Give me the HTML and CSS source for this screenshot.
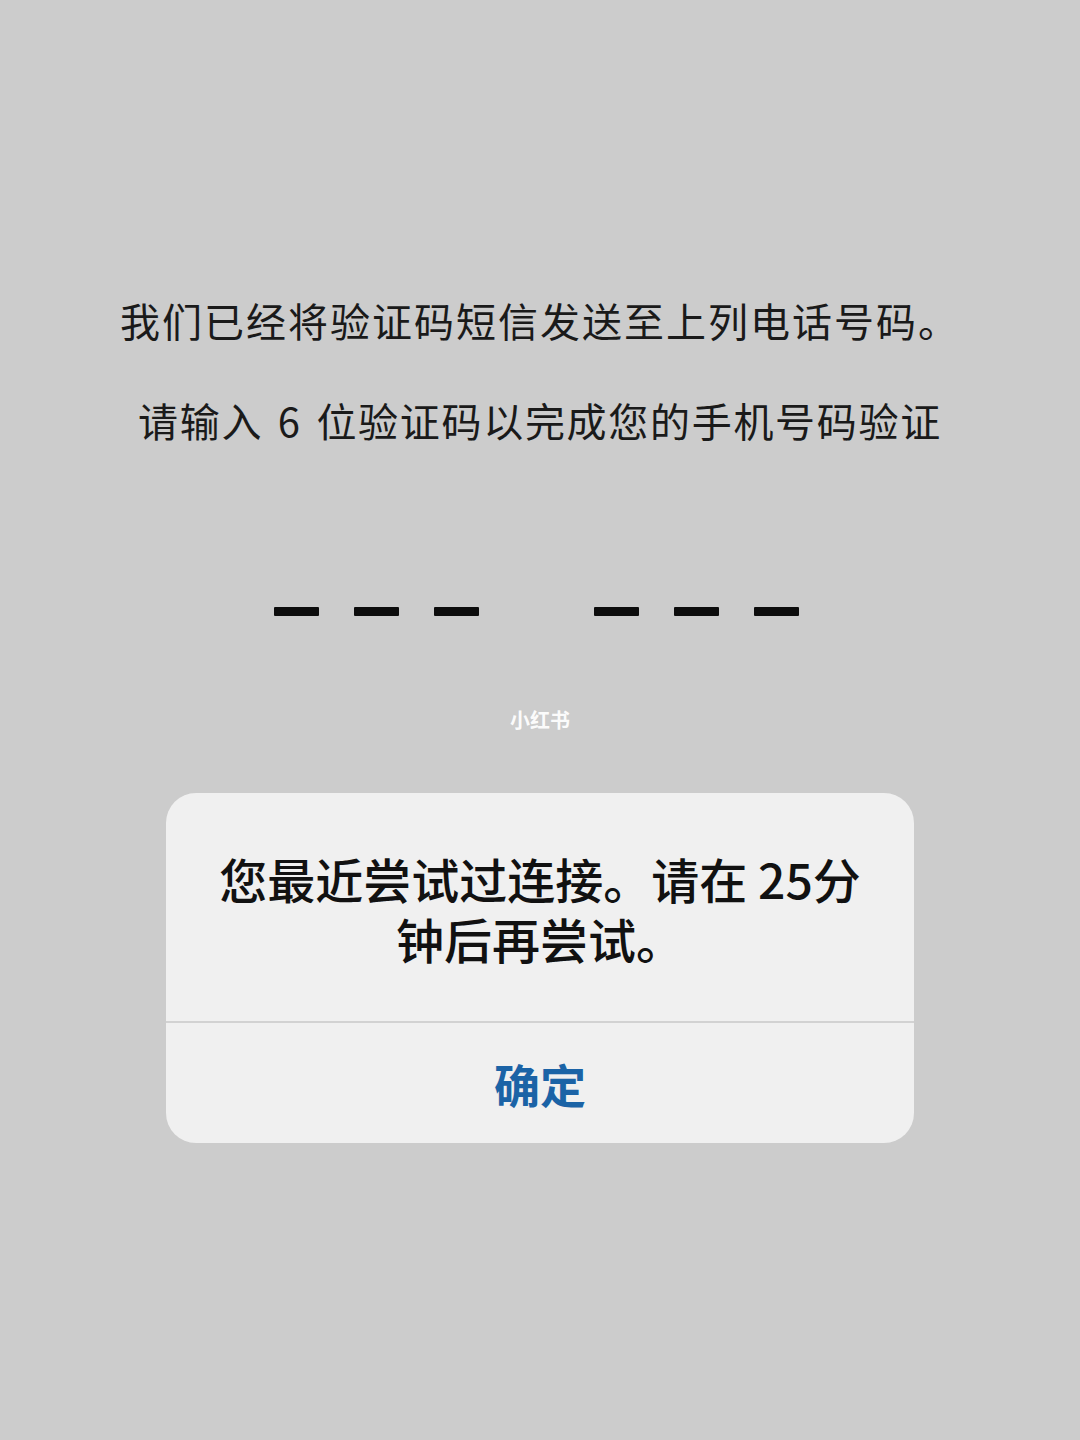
FILE: index.html
```html
<!DOCTYPE html>
<html lang="zh-CN">
<head>
<meta charset="utf-8">
<title>验证码</title>
<link rel="stylesheet" href="styles.css">
</head>
<body>
<main class="screen">
  <p class="msg msg-1">我们已经将验证码短信发送至上列电话号码。</p>
  <p class="msg msg-2">请输入 6 位验证码以完成您的手机号码验证</p>
  <div class="code">
    <div class="group"><span class="dash"></span><span class="dash"></span><span class="dash"></span></div>
    <div class="group"><span class="dash"></span><span class="dash"></span><span class="dash"></span></div>
  </div>
  <div class="mark">小红书</div>
  <section class="alert">
    <div class="alert-body">您最近尝试过连接。请在 25分钟后再尝试。</div>
    <div class="alert-btn">确定</div>
  </section>
</main>
</body>
</html>
```

FILE: styles.css
```css
html, body {
  margin: 0;
  padding: 0;
  background: #cccccc;
}

body {
  width: 1080px;
  height: 1440px;
  font-family: "Noto Sans CJK SC", "Noto Sans", sans-serif;
}

.screen {
  display: flex;
  flex-direction: column;
  align-items: center;
  padding-top: 290px;
}

.msg {
  margin: 0;
  font-size: 40px;
  line-height: 60px;
  color: #1a1a1a;
  text-align: center;
}

.msg-1 {
  letter-spacing: 2px;
}

.msg-2 {
  margin-top: 40px;
  letter-spacing: 1.7px;
  word-spacing: 4px;
}

.code {
  margin-top: 157px;
  display: flex;
  gap: 115px;
  padding-right: 7px;
}

.group {
  display: flex;
  gap: 35px;
}

.dash {
  display: block;
  width: 45px;
  height: 9px;
  background: #0d0d0d;
  border-radius: 1px;
}

.mark {
  margin-top: 92px;
  font-size: 20px;
  line-height: 24px;
  font-weight: 700;
  color: rgba(255, 255, 255, 0.95);
}

.alert {
  margin-top: 61px;
  width: 748px;
  background: #f0f0f0;
  border-radius: 30px;
  overflow: hidden;
}

.alert-body {
  padding: 55px 40px 53px;
  font-size: 48px;
  line-height: 60px;
  font-weight: 500;
  color: #111111;
  text-align: center;
}

.alert-btn {
  border-top: 2px solid #d2d2d2;
  height: 120px;
  display: flex;
  align-items: center;
  justify-content: center;
  font-size: 46px;
  font-weight: 600;
  color: #1b63a6;
}
```
